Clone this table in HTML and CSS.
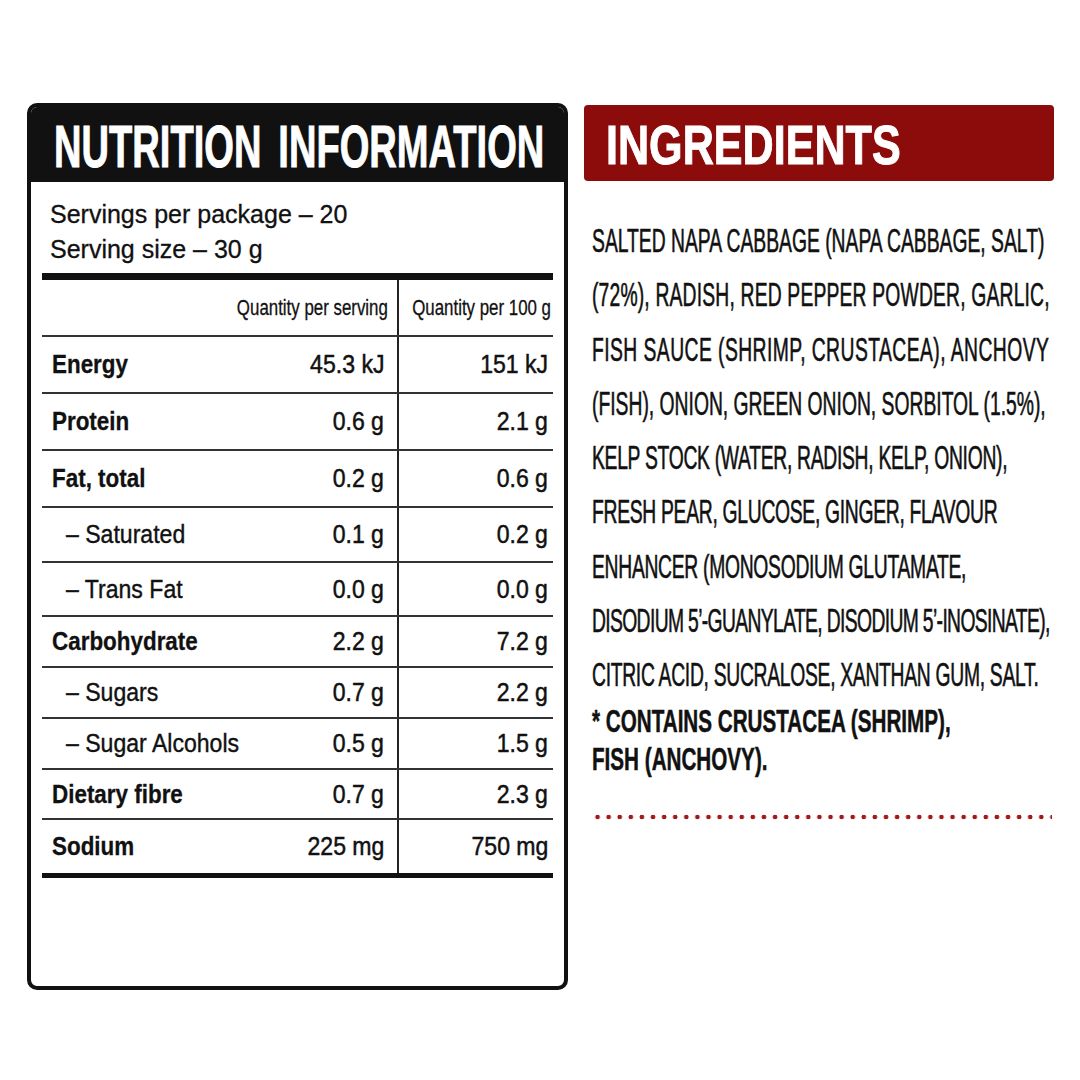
FILE: index.html
```html
<!DOCTYPE html>
<html lang="en">
<head>
<meta charset="utf-8">
<title>Nutrition Information and Ingredients</title>
<link rel="stylesheet" href="styles.css">
</head>
<body>
<div class="page">
  <section class="nutri">
    <header class="nutri-head"><h1 class="nutri-title">NUTRITION INFORMATION</h1></header>
    <div class="servings">
      <p>Servings per package – 20</p>
      <p>Serving size – 30 g</p>
    </div>
    <div class="table">
      <div class="row head"><span class="label"></span><span class="q q1"><span class="t">Quantity per serving</span></span><span class="q q2"><span class="t">Quantity per 100 g</span></span></div>
      <div class="row"><span class="label"><span class="t">Energy</span></span><span class="v v1"><span class="t">45.3 kJ</span></span><span class="v v2"><span class="t">151 kJ</span></span></div>
      <div class="row"><span class="label"><span class="t">Protein</span></span><span class="v v1"><span class="t">0.6 g</span></span><span class="v v2"><span class="t">2.1 g</span></span></div>
      <div class="row"><span class="label"><span class="t">Fat, total</span></span><span class="v v1"><span class="t">0.2 g</span></span><span class="v v2"><span class="t">0.6 g</span></span></div>
      <div class="row"><span class="label sub"><span class="t">– Saturated</span></span><span class="v v1"><span class="t">0.1 g</span></span><span class="v v2"><span class="t">0.2 g</span></span></div>
      <div class="row"><span class="label sub"><span class="t">– Trans Fat</span></span><span class="v v1"><span class="t">0.0 g</span></span><span class="v v2"><span class="t">0.0 g</span></span></div>
      <div class="row"><span class="label"><span class="t">Carbohydrate</span></span><span class="v v1"><span class="t">2.2 g</span></span><span class="v v2"><span class="t">7.2 g</span></span></div>
      <div class="row"><span class="label sub"><span class="t">– Sugars</span></span><span class="v v1"><span class="t">0.7 g</span></span><span class="v v2"><span class="t">2.2 g</span></span></div>
      <div class="row"><span class="label sub"><span class="t">– Sugar Alcohols</span></span><span class="v v1"><span class="t">0.5 g</span></span><span class="v v2"><span class="t">1.5 g</span></span></div>
      <div class="row"><span class="label"><span class="t">Dietary fibre</span></span><span class="v v1"><span class="t">0.7 g</span></span><span class="v v2"><span class="t">2.3 g</span></span></div>
      <div class="row"><span class="label"><span class="t">Sodium</span></span><span class="v v1"><span class="t">225 mg</span></span><span class="v v2"><span class="t">750 mg</span></span></div>
    </div>
  </section>
  <section class="ing">
    <header class="ing-head"><h2 class="ing-title">INGREDIENTS</h2></header>
    <div class="ing-body">
      <p class="ing-text">
        <span class="ln">SALTED NAPA CABBAGE (NAPA CABBAGE, SALT)</span>
        <span class="ln wide">(72%), RADISH, RED PEPPER POWDER, GARLIC,</span>
        <span class="ln wider">FISH SAUCE (SHRIMP, CRUSTACEA), ANCHOVY</span>
        <span class="ln">(FISH), ONION, GREEN ONION, SORBITOL (1.5%),</span>
        <span class="ln narrow">KELP STOCK (WATER, RADISH, KELP, ONION),</span>
        <span class="ln narrow">FRESH PEAR, GLUCOSE, GINGER, FLAVOUR</span>
        <span class="ln narrow">ENHANCER (MONOSODIUM GLUTAMATE,</span>
        <span class="ln narrower">DISODIUM 5’-GUANYLATE, DISODIUM 5’-INOSINATE),</span>
        <span class="ln narrow">CITRIC ACID, SUCRALOSE, XANTHAN GUM, SALT.</span>
      </p>
      <p class="allergen">* CONTAINS CRUSTACEA (SHRIMP),<br>FISH (ANCHOVY).</p>
    </div>
    <div class="dots"></div>
  </section>
</div>
</body>
</html>
```
FILE: styles.css
```css
body {
  margin: 0;
  background: #fff;
  color: #111;
  font-family: "Liberation Sans", Arial, sans-serif;
}

.page {
  display: flex;
  align-items: flex-start;
  gap: 16px;
  padding: 103px 0 0 27px;
}

/* ---------- Nutrition panel ---------- */
.nutri {
  width: 541px;
  height: 887px;
  box-sizing: border-box;
  border: 4px solid #111;
  border-radius: 10px;
  overflow: hidden;
  background: #fff;
}

.nutri-head {
  height: 75px;
  background: #111;
  display: flex;
  align-items: center;
  padding-left: 23px;
}

.nutri-title {
  margin: 0;
  color: #fff;
  font-weight: bold;
  font-size: 60px;
  line-height: 1;
  white-space: nowrap;
  word-spacing: 10px;
  transform: scaleX(0.635);
  transform-origin: left center;
  padding-top: 4px;
  -webkit-text-stroke: 1px #fff;
}

.servings {
  padding: 15px 0 0 19px;
  font-size: 25px;
  line-height: 35px;
  -webkit-text-stroke: 0.3px #111;
}

.servings p {
  margin: 0;
}

.table {
  margin: 6px 11px 0;
  border-top: 7px solid #111;
  border-bottom: 5px solid #111;
}

.row {
  display: grid;
  grid-template-columns: 190px 165px minmax(0, 1fr);
  box-sizing: border-box;
  border-bottom: 2px solid #333;
}

.row:last-child {
  border-bottom: none;
}

.row:nth-child(1),
.row:nth-child(2),
.row:nth-child(3),
.row:nth-child(4) { height: 57px; }
.row:nth-child(5) { height: 55px; }
.row:nth-child(6) { height: 54px; }
.row:nth-child(7),
.row:nth-child(8),
.row:nth-child(9) { height: 51px; }
.row:nth-child(10) { height: 50px; }
.row:nth-child(11) { height: 53px; }

.row > span {
  display: flex;
  align-items: center;
  white-space: nowrap;
  min-width: 0;
}

.t {
  display: inline-block;
  flex: none;
}

.label {
  padding-left: 10px;
  font-weight: bold;
  font-size: 26.5px;
}

.label .t {
  transform: scaleX(0.846);
  transform-origin: left center;
  -webkit-text-stroke: 0.3px #111;
}

.label.sub {
  font-weight: normal;
  padding-left: 24px;
}

.label.sub .t {
  transform: scaleX(0.87);
  -webkit-text-stroke: 0.4px #111;
}

.q {
  font-size: 22px;
  justify-content: flex-end;
}

.q .t {
  transform: scaleX(0.767);
  transform-origin: right center;
  -webkit-text-stroke: 0.3px #111;
}

.q1 { padding-right: 9px; }
.q2 { padding-right: 2px; }

.v {
  font-size: 26.5px;
  justify-content: flex-end;
}

.v .t {
  transform: scaleX(0.87);
  transform-origin: right center;
  -webkit-text-stroke: 0.5px #111;
}

.v1 { padding-right: 13px; }
.v2 { padding-right: 5px; }

.q2, .v2 {
  border-left: 2px solid #222;
}

/* ---------- Ingredients ---------- */
.ing {
  width: 470px;
  margin-top: 2px;
  overflow: hidden;
}

.ing-head {
  height: 76px;
  background: #8c0b0b;
  border-radius: 4px;
  display: flex;
  align-items: center;
  padding-left: 22px;
}

.ing-title {
  margin: 0;
  color: #fff;
  font-weight: bold;
  font-size: 56px;
  line-height: 1;
  white-space: nowrap;
  transform: scaleX(0.77);
  transform-origin: left center;
  padding-top: 4px;
  -webkit-text-stroke: 1px #fff;
}

.ing-body {
  padding: 33px 0 0 8px;
}

.ing-text {
  margin: 0;
  font-size: 33px;
  line-height: 54.3px;
  white-space: nowrap;
  transform: scaleX(0.585);
  transform-origin: left top;
  -webkit-text-stroke: 0.6px #111;
}

.ln {
  display: block;
}

.ln.wide { letter-spacing: 0.3px; }
.ln.wider { letter-spacing: 0.75px; }
.ln.narrow { letter-spacing: -0.5px; }
.ln.narrower { letter-spacing: -1.1px; }

.allergen {
  margin: 0;
  font-weight: bold;
  font-size: 31px;
  line-height: 38px;
  white-space: nowrap;
  transform: scaleX(0.666);
  transform-origin: left top;
  -webkit-text-stroke: 0.5px #111;
}

.dots {
  margin: 35px 0 0 8px;
  width: 460px;
  height: 6px;
  background-image: radial-gradient(circle, #a01a1a 0 2px, transparent 2.6px);
  background-size: 11.1px 6px;
  background-repeat: repeat-x;
}
```
